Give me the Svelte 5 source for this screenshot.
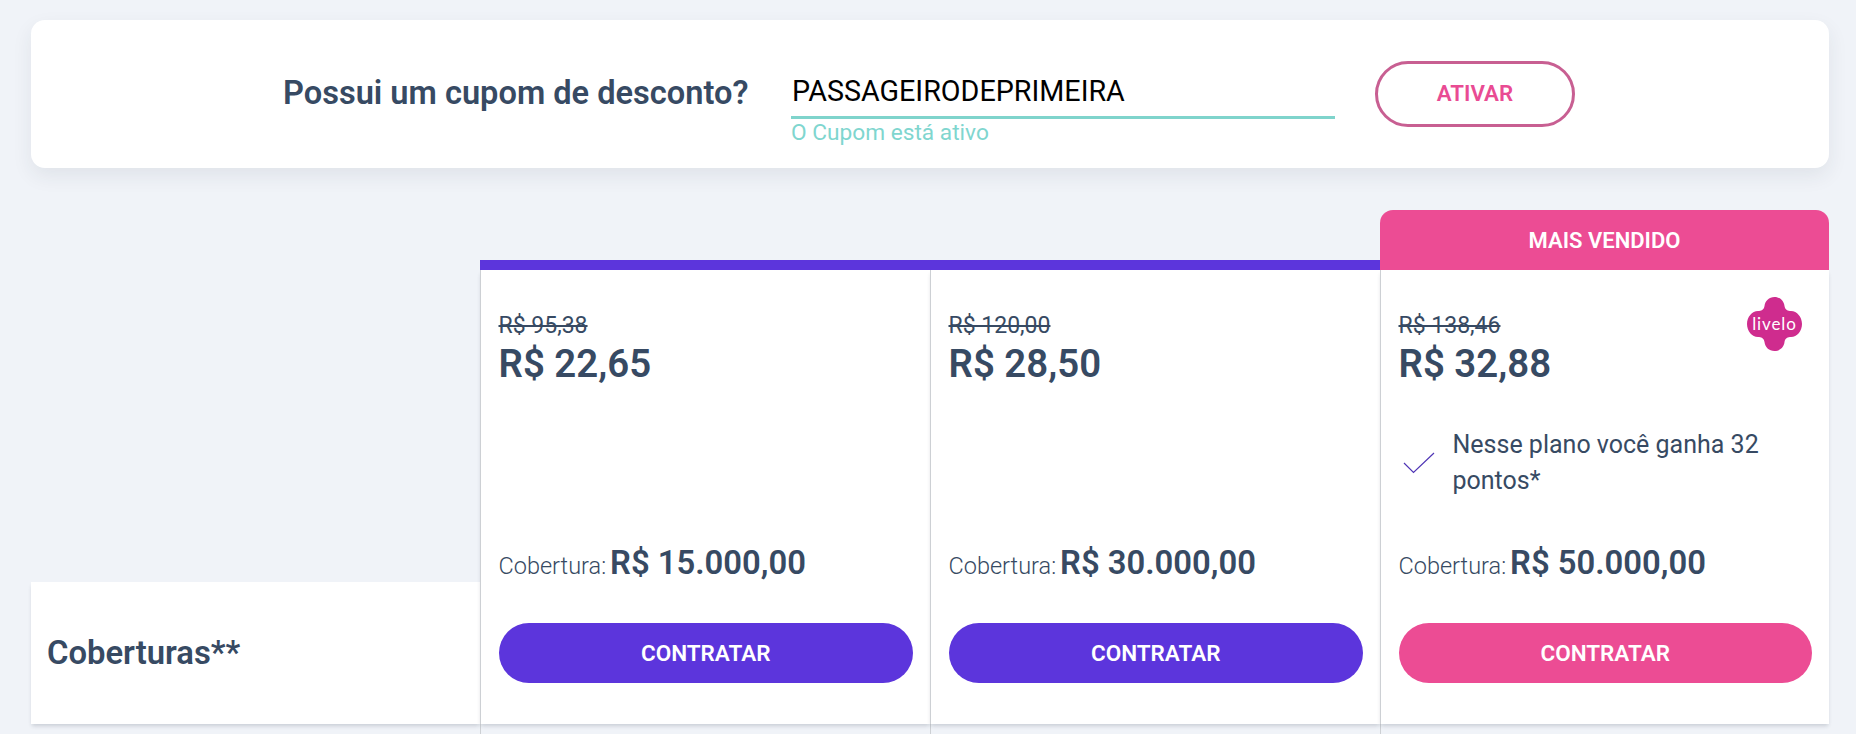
<script>
	const plans = [
		{ old: 'R$ 95,38', price: 'R$ 22,65', cover: 'R$ 15.000,00' },
		{ old: 'R$ 120,00', price: 'R$ 28,50', cover: 'R$ 30.000,00' },
		{ old: 'R$ 138,46', price: 'R$ 32,88', cover: 'R$ 50.000,00', featured: true }
	];
</script>

<div class="page">
	<section class="coupon">
		<h2>Possui um cupom de desconto?</h2>
		<div class="field">
			<div class="code">PASSAGEIRODEPRIMEIRA</div>
			<div class="status">O Cupom está ativo</div>
		</div>
		<button class="activate">ATIVAR</button>
	</section>

	<section class="plans">
		<div class="label-col">
			<div class="label">Coberturas**</div>
		</div>
		{#each plans as plan}
			<div class="plan" class:featured={plan.featured}>
				<div class="head">
					{#if plan.featured}
						<div class="badge">MAIS VENDIDO</div>
					{:else}
						<div class="bar"></div>
					{/if}
				</div>
				<div class="body">
					<div class="old">{plan.old}</div>
					<div class="price">{plan.price}</div>
					{#if plan.featured}
						<svg class="livelo" viewBox="0 0 55 54" width="55" height="54">
							<path d="M27.5 0C33 0 37 4 37.5 9C38 13 41 14 44 14C50 14 55 20 55 27C55 34 50 40 44 40C41 40 38 41 37.5 45C37 50 33 54 27.5 54C22 54 18 50 17.5 45C17 41 14 40 11 40C5 40 0 34 0 27C0 20 5 14 11 14C14 14 17 13 17.5 9C18 4 22 0 27.5 0Z" fill="#cf2c8e" />
							<text x="27.5" y="33" text-anchor="middle" fill="#fff">livelo</text>
						</svg>
						<div class="points">
							<svg viewBox="0 0 32 22" width="32" height="22">
								<path d="M1 11L10.5 20.5L31 1" fill="none" stroke="#4f35b5" stroke-width="1.2" />
							</svg>
							<p>Nesse plano você ganha 32 pontos*</p>
						</div>
					{/if}
					<div class="cover"><span>Cobertura:</span> <strong>{plan.cover}</strong></div>
					<button class="buy">CONTRATAR</button>
				</div>
				<div class="tail"></div>
			</div>
		{/each}
	</section>
</div>

<style>
	:global(body) {
		background: #f0f3f8;
		overflow: hidden;
	}

	.page {
		box-sizing: border-box;
		height: 734px;
		overflow: hidden;
		padding: 20px 27px 0 31px;
		font-family: Roboto, 'Noto Sans', sans-serif;
		color: #374a63;
	}

	button {
		font-family: inherit;
		cursor: pointer;
	}

	.coupon {
		display: flex;
		align-items: flex-start;
		height: 148px;
		padding-left: 252px;
		box-sizing: border-box;
		background: #fff;
		border-radius: 14px;
		box-shadow: 0 8px 20px rgba(40, 50, 70, 0.08);
	}

	h2 {
		margin: 54px 0 0;
		width: 508px;
		font-size: 32.6px;
		line-height: 38px;
		font-weight: 600;
	}

	.field {
		width: 544px;
		margin-top: 54px;
	}

	.code {
		height: 42px;
		padding-left: 1px;
		border-bottom: 3px solid #7fd4cc;
		font-size: 28.7px;
		line-height: 35px;
		color: #000;
	}

	.status {
		font-size: 22.7px;
		line-height: 28px;
		color: #7fd6cf;
	}

	.activate {
		width: 200px;
		height: 66px;
		margin: 41px 0 0 40px;
		padding-bottom: 3px;
		background: #fff;
		border: 3px solid #c85f92;
		border-radius: 33px;
		font-size: 22.3px;
		font-weight: 600;
		color: #e94b93;
	}

	.plans {
		display: grid;
		grid-template-columns: 449px 450px 450px 449px;
		margin-top: 42px;
	}

	.label-col {
		display: flex;
		align-items: flex-end;
		height: 514px;
	}

	.label {
		box-sizing: border-box;
		width: 100%;
		height: 142px;
		padding: 0 16px;
		background: #fff;
		box-shadow: 0 3px 4px -1px rgba(30, 40, 60, 0.18);
		font-size: 32.8px;
		font-weight: 600;
		line-height: 143px;
	}

	.head {
		display: flex;
		align-items: flex-end;
		height: 60px;
	}

	.bar {
		width: 100%;
		height: 10px;
		background: #5c35dc;
	}

	.badge {
		width: 100%;
		height: 60px;
		background: #ec4c94;
		border-radius: 13px 13px 0 0;
		color: #fff;
		font-size: 22px;
		font-weight: 600;
		line-height: 61px;
		text-align: center;
	}

	.body {
		position: relative;
		display: flex;
		flex-direction: column;
		box-sizing: border-box;
		height: 454px;
		padding: 42px 17px 0 17.5px;
		background: #fff;
		border-left: 1.5px solid #cdd0d4;
		box-shadow: 0 3px 4px -1px rgba(30, 40, 60, 0.18);
	}

	.tail {
		height: 10px;
		border-left: 1.5px solid #cdd0d4;
	}

	.old {
		font-size: 23px;
		line-height: 28px;
		text-decoration: line-through;
	}

	.price {
		margin-top: 1px;
		font-size: 38.4px;
		line-height: 45px;
		font-weight: 600;
	}

	.livelo {
		position: absolute;
		top: 27px;
		right: 27px;
	}

	.livelo text {
		font-family: Lato, sans-serif;
		font-size: 17px;
		letter-spacing: 0.9px;
	}

	.points {
		display: flex;
		align-items: center;
		gap: 18px;
		margin-top: 41px;
		padding-left: 4px;
	}

	.points svg {
		flex: none;
	}

	.points p {
		margin: 0;
		font-size: 25px;
		line-height: 35.5px;
	}

	.cover {
		margin-top: auto;
		height: 40px;
		line-height: 40px;
	}

	.cover span {
		font-size: 23.5px;
		font-weight: 300;
	}

	.cover strong {
		font-size: 32.8px;
		font-weight: 600;
	}

	.buy {
		height: 60px;
		margin: 40px 0 41px;
		background: #5c35dc;
		border: 0;
		border-radius: 30px;
		color: #fff;
		font-size: 22.5px;
		font-weight: 600;
	}

	.featured .buy {
		background: #ec4c94;
	}
</style>
